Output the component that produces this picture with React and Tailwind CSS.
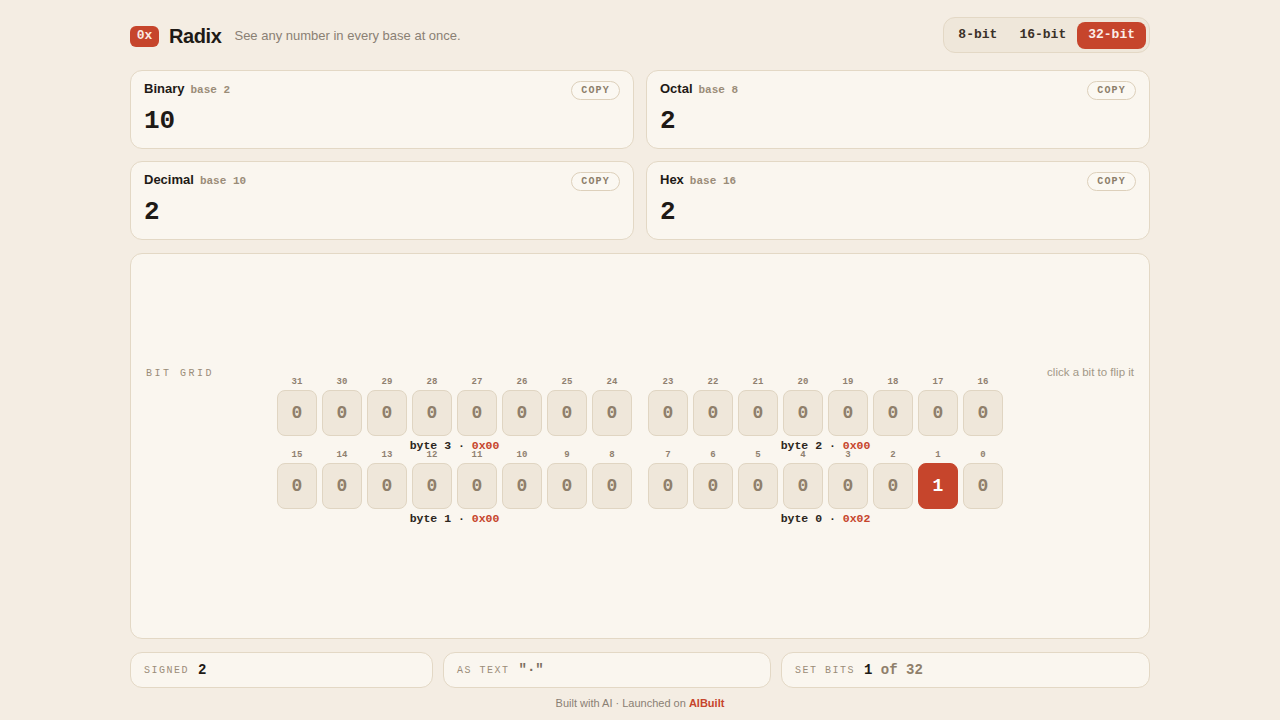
import { useState } from "react";

const MONO = "font-['Liberation_Mono',monospace]";
const SANS = "font-['Liberation_Sans',Arial,sans-serif]";

function BaseCard({ name, base, value }) {
  return (
    <div className="h-[79px] rounded-xl border border-[#e3d8c5] bg-[#faf6ef] px-[13px] pt-[10px]">
      <div className="flex items-start justify-between">
        <div className="flex items-baseline gap-[6px]">
          <span className={`${SANS} text-[13px] font-bold leading-[15px] text-[#1e1a16]`}>{name}</span>
          <span className={`${MONO} text-[11px] font-bold leading-[15px] text-[#9a8c78]`}>base {base}</span>
        </div>
        <button className={`${MONO} h-[19px] rounded-full border border-[#ddd0bb] bg-[#fbf8f2] px-[9px] text-[10px] font-bold tracking-[0.12em] text-[#8c7d69]`}>
          COPY
        </button>
      </div>
      <div className={`${MONO} mt-[3px] text-[26px] font-bold leading-[36px] text-[#1e1a16]`}>{value}</div>
    </div>
  );
}

function Byte({ bits, index, value, flip }) {
  const hex = "0x" + ((value >>> (index * 8)) & 0xff).toString(16).toUpperCase().padStart(2, "0");
  return (
    <div className="flex flex-col items-center">
      <div className="flex gap-[5px]">
        {bits.map((b) => {
          const on = (value >>> b) & 1;
          return (
            <div key={b} className="flex flex-col items-center">
              <span className={`${MONO} h-[13px] text-[9px] font-bold leading-[10px] text-[#8f8070]`}>{b}</span>
              <button
                onClick={() => flip(b)}
                className={`${MONO} flex h-[46px] w-[40px] items-center justify-center rounded-lg border text-[18px] font-bold ${
                  on ? "border-[#c6452c] bg-[#c6452c] text-white" : "border-[#e0d5c2] bg-[#efe7da] text-[#8f7f6b]"
                }`}
              >
                {on}
              </button>
            </div>
          );
        })}
      </div>
      <div className={`${MONO} mt-[4px] h-[12px] text-[11.5px] font-bold leading-[12px] text-[#2c2620]`}>
        byte {index} · <span className="text-[#c6452c]">{hex}</span>
      </div>
    </div>
  );
}

export default function App() {
  const [value, setValue] = useState(2);
  const flip = (b) => setValue((v) => (v ^ (1 << b)) >>> 0);
  const range = (hi) => Array.from({ length: 8 }, (_, i) => hi - i);
  const setBits = value.toString(2).split("").filter((c) => c === "1").length;

  return (
    <div className={`${SANS} min-h-screen bg-[#f4ede3]`}>
      <div className="mx-auto w-[1020px]">
        {/* header */}
        <div className="flex h-[70px] items-center justify-between pt-[2px]">
          <div className="flex items-center">
            <span className={`${MONO} flex h-[21px] w-[29px] items-center justify-center rounded-md bg-[#c6452c] text-[13px] font-bold text-[#fbe9e2]`}>0x</span>
            <span className="ml-[10px] text-[20px] font-bold tracking-[-0.02em] text-[#1e1a16]">Radix</span>
            <span className="ml-[13px] text-[13px] text-[#8a8074]">See any number in every base at once.</span>
          </div>
          <div className={`${MONO} -mt-[2px] flex h-[36px] items-center rounded-xl border border-[#e3d8c5] bg-[#efe7da] px-[3px] text-[13px] font-bold`}>
            <button className="h-[27px] px-[11px] text-[#3b3128]">8-bit</button>
            <button className="h-[27px] px-[11px] text-[#3b3128]">16-bit</button>
            <button className="h-[27px] rounded-lg bg-[#c6452c] px-[11px] text-[#fbeee8]">32-bit</button>
          </div>
        </div>

        {/* base cards */}
        <div className="grid grid-cols-2 gap-x-[12px] gap-y-[12px]">
          <BaseCard name="Binary" base="2" value={value.toString(2)} />
          <BaseCard name="Octal" base="8" value={value.toString(8)} />
          <BaseCard name="Decimal" base="10" value={value.toString(10)} />
          <BaseCard name="Hex" base="16" value={value.toString(16).toUpperCase()} />
        </div>

        {/* bit grid */}
        <div className="mt-[13px] flex h-[386px] flex-col justify-center rounded-xl border border-[#e3d8c5] bg-[#faf6ef] px-[15px]">
          <div className="flex h-[12px] items-center justify-between">
            <span className={`${MONO} text-[10px] tracking-[0.25em] text-[#9a8c78]`}>BIT GRID</span>
            <span className="text-[11.5px] text-[#a29887]">click a bit to flip it</span>
          </div>
          <div className="-mt-[2px] flex flex-col items-center">
            <div className="flex gap-[16px]">
              <Byte bits={range(31)} index={3} value={value} flip={flip} />
              <Byte bits={range(23)} index={2} value={value} flip={flip} />
            </div>
            <div className="-mt-[2px] flex gap-[16px]">
              <Byte bits={range(15)} index={1} value={value} flip={flip} />
              <Byte bits={range(7)} index={0} value={value} flip={flip} />
            </div>
          </div>
        </div>

        {/* stats */}
        <div className="mt-[13px] flex gap-[10px]">
          <div className="flex h-[36px] w-[303px] items-center gap-[9px] rounded-xl border border-[#e3d8c5] bg-[#faf6ef] px-[13px]">
            <span className={`${MONO} text-[10px] tracking-[0.15em] text-[#9a8c78]`}>SIGNED</span>
            <span className={`${MONO} text-[14px] font-bold text-[#1e1a16]`}>{value | 0}</span>
          </div>
          <div className="flex h-[36px] w-[328px] items-center gap-[9px] rounded-xl border border-[#e3d8c5] bg-[#faf6ef] px-[13px]">
            <span className={`${MONO} text-[10px] tracking-[0.15em] text-[#9a8c78]`}>AS TEXT</span>
            <span className={`${MONO} text-[14px] font-bold text-[#7a6e60]`}>"·"</span>
          </div>
          <div className="flex h-[36px] flex-1 items-center gap-[9px] rounded-xl border border-[#e3d8c5] bg-[#faf6ef] px-[13px]">
            <span className={`${MONO} text-[10px] tracking-[0.15em] text-[#9a8c78]`}>SET BITS</span>
            <span className={`${MONO} text-[14px] font-bold text-[#8f7f6b]`}>
              <span className="text-[#1e1a16]">{setBits}</span> of 32
            </span>
          </div>
        </div>

        {/* footer */}
        <div className="mt-[7px] text-center text-[11px] text-[#8a8074]">
          Built with AI · Launched on <span className="font-bold text-[#c6452c]">AIBuilt</span>
        </div>
      </div>
    </div>
  );
}
